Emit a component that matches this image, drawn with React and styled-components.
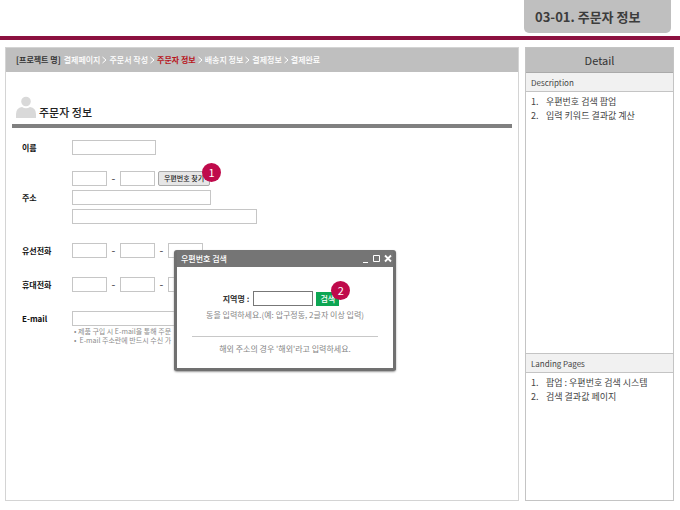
import React from "react"
import styled, { createGlobalStyle } from "styled-components"

const GlobalStyle = createGlobalStyle`
  * {
    box-sizing: border-box;
  }

  body {
    margin: 0;
    background: #fff;
    color: #444;
    font-family: "Noto Sans CJK KR", "Liberation Sans", sans-serif;
    font-size: 8px;
    line-height: 12px;
  }

  input, button {
    font: inherit;
  }
`

const Page = styled.div`
  min-height: 100vh;
  display: flex;
  flex-direction: column;
`

const Header = styled.header`
  height: 40px;
  flex-shrink: 0;
  display: flex;
  justify-content: flex-end;
  align-items: flex-start;
  padding-right: 9px;
  border-bottom: 4px solid #8c1140;
`

const PageTab = styled.h1`
  margin: 0;
  width: 147px;
  height: 33px;
  padding: 1px 11px 0;
  border-radius: 0 0 5px 5px;
  background: #bfbfbf;
  color: #3c3c3c;
  font-size: 13px;
  font-weight: 700;
  line-height: 31px;
  white-space: nowrap;
`

const Columns = styled.div`
  flex: 1;
  display: flex;
  gap: 6px;
  padding: 7px 6px 9px 5px;
`

const Screen = styled.main`
  position: relative;
  flex: 1;
  min-width: 0;
  border: 1px solid #d4d4d4;
`

const Breadcrumb = styled.nav`
  height: 24px;
  display: flex;
  align-items: center;
  gap: 2px;
  padding-left: 10px;
  background: #bfbfbf;
  color: #fff;
  font-weight: 500;
  white-space: nowrap;
`

const Project = styled.strong`
  margin-right: 1px;
  color: #333;
  font-weight: 700;
`

const Crumb = styled.a`
  color: ${({ $current }) => ($current ? "#b8141c" : "#fff")};
  font-weight: ${({ $current }) => ($current ? 700 : 500)};
  text-decoration: none;
`

const Arrow = styled.svg`
  width: 5px;
  height: 8px;
  fill: none;
  stroke: #fff;
`

const SectionTitle = styled.h2`
  display: flex;
  align-items: flex-end;
  gap: 3px;
  margin: 24px 6px 0;
  padding: 0 0 6px 4px;
  border-bottom: 4px solid #808080;
  color: #222;
  font-size: 11px;
  font-weight: 500;
  line-height: 12px;
`

const Avatar = styled.svg`
  width: 20px;
  height: 22px;
  fill: #d9d9d9;
`

const Form = styled.form`
  padding: 12px 16px 0;
`

const Row = styled.div`
  display: flex;
  align-items: ${({ $top }) => ($top ? "flex-start" : "center")};
  margin-bottom: ${({ $tight }) => ($tight ? 16 : 19)}px;
`

const Label = styled.label`
  width: 50px;
  flex-shrink: 0;
  color: #111;
  font-weight: 700;
  line-height: 15px;
`

const Fields = styled.div`
  display: flex;
  flex-direction: column;
  gap: ${({ $gap = 4 }) => $gap}px;
`

const Line = styled.div`
  display: flex;
  align-items: center;
  gap: 3px;
`

const Dash = styled.span`
  width: 7px;
  font-size: 11px;
  line-height: 15px;
  text-align: center;
`

const widths = { part: 35, keyword: 60, name: 84, street: 139, detail: 185 }

const Input = styled.input`
  width: ${({ $size }) => widths[$size]}px;
  height: 15px;
  padding: 0 3px;
  border: 1px solid ${({ $dark }) => ($dark ? "#777" : "#c6c6c6")};
  border-radius: 0;
  background: #fff;
  outline: none;
`

const Anchor = styled.div`
  position: relative;
  display: flex;
`

const FindButton = styled.button`
  width: 52px;
  height: 15px;
  padding: 0;
  border: 1px solid #aaa;
  border-radius: 2px;
  background: #e6e6e6;
  color: #222;
  font-size: 7px;
  font-weight: 500;
  line-height: 13px;
  white-space: nowrap;
`

const Badge = styled.span`
  position: absolute;
  top: ${({ $top }) => $top}px;
  right: -11px;
  width: 19px;
  height: 19px;
  border-radius: 50%;
  background: #bf0a4b;
  color: #fff;
  font-size: 11px;
  line-height: 18px;
  text-align: center;
`

const Notes = styled.ul`
  margin: 0;
  padding: 0 0 0 2px;
  list-style: none;
  color: #8c8c8c;
  font-size: 7px;
  line-height: 9px;
  white-space: nowrap;
`

const Popup = styled.section`
  position: absolute;
  top: 202px;
  left: 168px;
  width: 222px;
  border: 3px solid #707070;
  border-top-width: 0;
  border-radius: 3px;
  background: #fff;
  box-shadow: 0 1px 2px #999;
`

const PopupBar = styled.div`
  height: 17px;
  display: flex;
  align-items: center;
  justify-content: space-between;
  padding: 0 1px 0 4px;
  background: #757575;
  color: #fff;
`

const PopupTitle = styled.h3`
  margin: 0;
  font-size: 8px;
  font-weight: 500;
`

const Controls = styled.div`
  display: flex;
  gap: 3px;
`

const Control = styled.button`
  width: 8px;
  height: 9px;
  padding: 0;
  border: 0;
  background: none;
  display: flex;

  svg {
    width: 8px;
    height: 9px;
    fill: none;
    stroke: #fff;
  }
`

const PopupBody = styled.form`
  padding: 24px 15px 13px;
  color: #858585;
  text-align: center;

  p {
    margin: 0;
    white-space: nowrap;
  }

  hr {
    margin: 15px 0 6px;
    border: 0;
    border-top: 1px solid #c8c8c8;
  }
`

const SearchLine = styled.div`
  display: flex;
  justify-content: center;
  align-items: center;
  gap: 3px;
  margin-bottom: 3px;
  padding-right: 8px;
`

const SearchLabel = styled.label`
  margin-right: 1px;
  color: #333;
  font-weight: 700;
`

const SearchButton = styled.button`
  width: 23px;
  height: 14px;
  padding: 0;
  border: 0;
  background: #0ca653;
  color: #fff;
  font-weight: 500;
  line-height: 14px;
`

const Detail = styled.aside`
  width: 149px;
  flex-shrink: 0;
  display: flex;
  flex-direction: column;
  border: 1px solid #c4c4c4;
`

const DetailTitle = styled.h2`
  margin: 0;
  height: 25px;
  border-bottom: 1px solid #aaa;
  background: #bfbfbf;
  color: #333;
  font-size: 11px;
  font-weight: 400;
  line-height: 24px;
  text-align: center;
`

const DetailHeading = styled.h3`
  margin: 0;
  padding: 1px 0 0 5px;
  border-bottom: 1px solid #c4c4c4;
  background: #f1f1f1;
  font-size: 8px;
  font-weight: 400;
  line-height: 17px;

  ol + & {
    border-top: 1px solid #c4c4c4;
  }
`

const DetailList = styled.ol`
  flex: ${({ $grow }) => $grow} 1 0;
  margin: 0;
  padding: 3px 5px;
  list-style: none;
  counter-reset: item;
  font-size: 9px;
  line-height: 14px;

  li {
    display: flex;
    counter-increment: item;
  }

  li::before {
    width: 15px;
    content: counter(item) ".";
  }
`

const crumbs = [
  "결제페이지",
  "주문서 작성",
  "주문자 정보",
  "배송지 정보",
  "결제정보",
  "결제완료",
]

const PhoneRow = ({ id, label }) => (
  <Row>
    <Label htmlFor={id}>{label}</Label>
    <Line>
      <Input $size="part" id={id} />
      <Dash>-</Dash>
      <Input $size="part" aria-label={`${label} 2`} />
      <Dash>-</Dash>
      <Input $size="part" aria-label={`${label} 3`} />
    </Line>
  </Row>
)

const OrderForm = () => (
  <Form>
    <Row $tight>
      <Label htmlFor="name">이름</Label>
      <Input $size="name" id="name" />
    </Row>
    <Row>
      <Label htmlFor="zip">주소</Label>
      <Fields>
        <Line>
          <Input $size="part" id="zip" />
          <Dash>-</Dash>
          <Input $size="part" aria-label="우편번호 2" />
          <Anchor>
            <FindButton type="button">우편번호 찾기</FindButton>
            <Badge $top={-8}>1</Badge>
          </Anchor>
        </Line>
        <Input $size="street" aria-label="주소" />
        <Input $size="detail" aria-label="상세주소" />
      </Fields>
    </Row>
    <PhoneRow id="phone" label="유선전화" />
    <PhoneRow id="mobile" label="휴대전화" />
    <Row $top>
      <Label htmlFor="email">E-mail</Label>
      <Fields $gap={1}>
        <Input $size="detail" id="email" />
        <Notes>
          <li>• 제품 구입 시 E-mail을 통해 주문</li>
          <li>•&nbsp; E-mail 주소란에 반드시 수신 가</li>
        </Notes>
      </Fields>
    </Row>
  </Form>
)

const ZipPopup = () => (
  <Popup>
    <PopupBar>
      <PopupTitle>우편번호 검색</PopupTitle>
      <Controls>
        <Control aria-label="최소화">
          <svg viewBox="0 0 8 9">
            <path d="M1 8.5h5" />
          </svg>
        </Control>
        <Control aria-label="최대화">
          <svg viewBox="0 0 8 9">
            <path d="M.5 1.5h6v6h-6z" />
          </svg>
        </Control>
        <Control aria-label="닫기">
          <svg viewBox="0 0 8 9">
            <path d="M1 1.500l6 6M7 1.500l-6 6" strokeWidth="1.8" />
          </svg>
        </Control>
      </Controls>
    </PopupBar>
    <PopupBody>
      <SearchLine>
        <SearchLabel htmlFor="keyword">지역명 :</SearchLabel>
        <Input $size="keyword" $dark id="keyword" />
        <Anchor>
          <SearchButton type="button">검색</SearchButton>
          <Badge $top={-11}>2</Badge>
        </Anchor>
      </SearchLine>
      <p>동을 입력하세요.(예: 압구정동, 2글자 이상 입력)</p>
      <hr />
      <p>해외 주소의 경우 '해외'라고 입력하세요.</p>
    </PopupBody>
  </Popup>
)

const App = () => (
  <Page>
    <GlobalStyle />
    <Header>
      <PageTab>03-01. 주문자 정보</PageTab>
    </Header>
    <Columns>
      <Screen>
        <Breadcrumb>
          <Project>[프로젝트 명]</Project>
          {crumbs.map((crumb, i) => (
            <React.Fragment key={crumb}>
              {i > 0 && (
                <Arrow viewBox="0 0 5 8">
                  <path d="M.5 1l3.5 3l-3.5 3" />
                </Arrow>
              )}
              <Crumb href="#" $current={i === 2}>
                {crumb}
              </Crumb>
            </React.Fragment>
          ))}
        </Breadcrumb>
        <SectionTitle>
          <Avatar viewBox="0 0 20 22">
            <circle cx="10" cy="5.5" r="4.8" />
            <path d="M0 22v-4q0-6 6-7q4 2.500 8 0q6 1 6 7v4z" />
          </Avatar>
          주문자 정보
        </SectionTitle>
        <OrderForm />
        <ZipPopup />
      </Screen>
      <Detail>
        <DetailTitle>Detail</DetailTitle>
        <DetailHeading>Description</DetailHeading>
        <DetailList $grow={21}>
          <li>우편번호 검색 팝업</li>
          <li>입력 키워드 결과값 계산</li>
        </DetailList>
        <DetailHeading>Landing Pages</DetailHeading>
        <DetailList $grow={10}>
          <li>팝업 : 우편번호 검색 시스템</li>
          <li>검색 결과값 페이지</li>
        </DetailList>
      </Detail>
    </Columns>
  </Page>
)

export default App
